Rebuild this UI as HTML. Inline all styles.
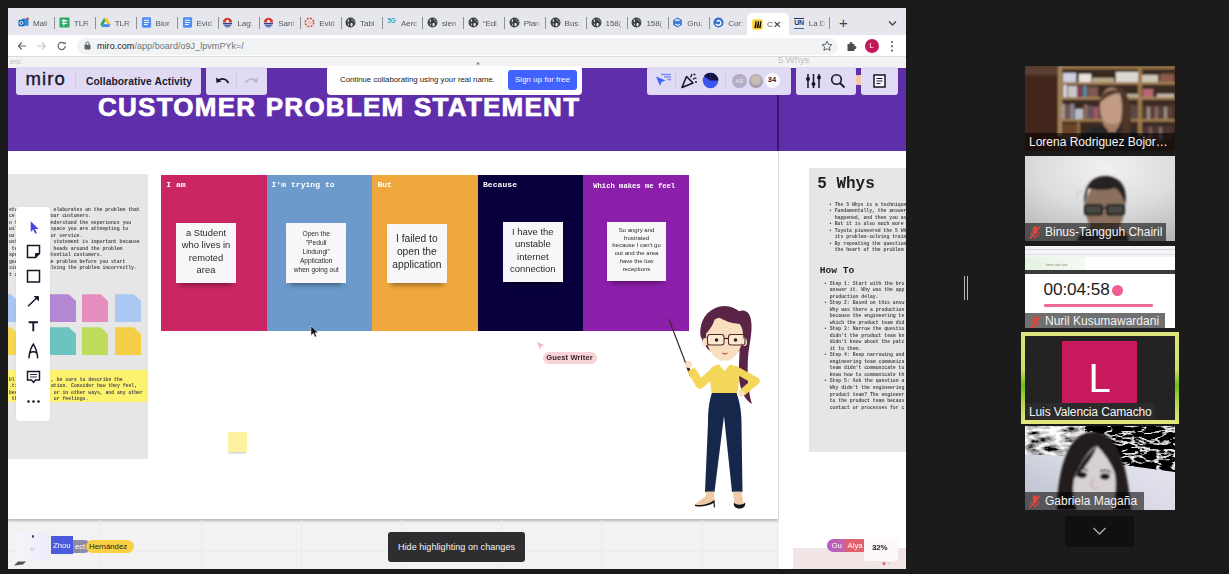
<!DOCTYPE html>
<html lang="en">
<head>
<meta charset="utf-8">
<title>Zoom - Miro Collaborative Activity</title>
<style>
*{box-sizing:border-box;margin:0;padding:0}
html,body{width:1229px;height:574px;overflow:hidden;background:#1b1b1b;font-family:"Liberation Sans",sans-serif}
i{font-style:normal}
.abs{position:absolute}
#share{position:absolute;left:8px;top:8px;width:898px;height:561px;background:#f2f2f2;overflow:hidden}
#blurwrap{position:absolute;left:0;top:0;width:898px;height:561px;filter:blur(.35px)}
/* chrome */
#tabs{position:absolute;left:0;top:0;width:898px;height:27px;background:#e6e7ed}
.tab{position:absolute;top:5px;height:22px;width:41px;font-size:8.1px;color:#54575d;white-space:nowrap;overflow:hidden}
.tab.act{background:#fff;border-radius:5px 5px 0 0;width:41.5px;top:5px;height:22px}
.tab.act .ic{top:5.5px}.tab.act .tx{top:7px}
.tab .ic{position:absolute;left:4.5px;top:4px;width:11px;height:11px;display:block}
.tab .tx{position:absolute;left:19.5px;top:5.5px;letter-spacing:-.1px;width:17.5px;overflow:hidden;-webkit-mask-image:linear-gradient(90deg,#000 70%,transparent)}
.tab .sep{position:absolute;left:0;top:4px;width:1px;height:12px;background:#8e9097}
#addr{position:absolute;left:0;top:27px;width:898px;height:22px;background:#fff;border-bottom:1px solid #dcdcdc}
#omni{position:absolute;left:69px;top:2.5px;width:761px;height:17px;border-radius:8.5px;background:#f1f3f4}
#url{position:absolute;left:89px;top:5.5px;font-size:9px;color:#70757a;letter-spacing:.05px;white-space:nowrap}
#url b{font-weight:normal;color:#202124}
/* miro */
#canvasTop{position:absolute;left:0;top:49px;width:898px;height:11px;background:#f3f3f3}
#purple{position:absolute;left:0;top:60px;width:898px;height:83px;background:#5f2fab}
#title{position:absolute;left:90px;top:84px;font-size:26px;font-weight:bold;color:#fff;white-space:nowrap;letter-spacing:1.25px;word-spacing:1px;line-height:30px;-webkit-text-stroke:.7px #fff}
#frameL{position:absolute;left:0;top:143px;width:770px;height:368px;background:#fff;box-shadow:0 1.5px 2.5px rgba(0,0,0,.25)}
#frameR{position:absolute;left:771px;top:143px;width:127px;height:418px;background:#fff}
#vline{position:absolute;left:769px;top:60px;width:1.5px;height:83px;background:#35186d}
#vline2{position:absolute;left:769.5px;top:143px;width:1.5px;height:368px;background:#d9d9de}
.panel{position:absolute;background:#e1daf5;border-radius:3px;top:59px;height:27.5px}
.mono{font-family:"Liberation Mono","DejaVu Sans Mono",monospace}
.col{position:absolute;top:166.8px;height:156.1px}
.col h4{position:absolute;left:5px;top:5.5px;font-family:"Liberation Mono",monospace;font-size:8.1px;line-height:10px;font-weight:bold;color:#fff;white-space:nowrap}
.note{position:absolute;background:#f8f6f9;box-shadow:0 6px 5px -4px rgba(0,0,0,.4);display:flex;align-items:center;justify-content:center;text-align:center;color:#2b2b2b;white-space:nowrap}
.gpanel{position:absolute;background:#e6e6e6;overflow:hidden}
.tiny{position:absolute;font-family:"Liberation Mono",monospace;color:#4c4c4c;white-space:pre;font-size:4.79px;line-height:6.53px;font-weight:bold}
.st{position:absolute;width:26px;height:28px;clip-path:polygon(0 0,72% 0,100% 24%,100% 100%,0 100%)}
/* zoom panel */
.tile{position:absolute;left:1025px;width:150px;overflow:hidden}
.lbl{position:absolute;left:0;bottom:0;height:18px;background:rgba(0,0,0,.56);color:#f4f4f4;font-size:12px;line-height:18px;white-space:nowrap;font-family:"Liberation Sans",sans-serif;letter-spacing:0;padding-left:4px}
.lbl.m{padding-left:20px}
.lbl svg{position:absolute;left:2.5px;top:2px;width:14px;height:15px}
.tsvg{overflow:visible}
.tsvg text{font-family:"Liberation Mono",monospace;font-size:4.79px;font-weight:bold;fill:#4c4c4c;white-space:pre}

</style>
</head>
<body>
<div id="share"><div id="blurwrap">
  <div id="tabs">
<div class="tab" style="left:5.4px"><svg class="ic" viewBox="0 0 12 12"><rect x="4" y="1.5" width="7.5" height="8" rx="1" fill="#2f8de0"/><rect x="0.5" y="3" width="6.5" height="7" rx="1" fill="#1565b8"/><circle cx="3.7" cy="6.5" r="1.7" fill="none" stroke="#fff" stroke-width="1"/><circle cx="10.5" cy="2" r="1.4" fill="#e0443a"/></svg><span class="tx">Mail</span></div>
<div class="tab" style="left:46.3px"><i class="sep"></i><svg class="ic" viewBox="0 0 12 12"><rect x="0.5" y="0.5" width="11" height="11" rx="1.5" fill="#2aa866"/><path d="M3 4h6M3 6.8h6M5.3 2.5v7" stroke="#fff" stroke-width="1.3"/></svg><span class="tx">TLR</span></div>
<div class="tab" style="left:87.2px"><i class="sep"></i><svg class="ic" viewBox="0 0 12 12"><path d="M4.3 1.2h3.4L11.6 8H8.2z" fill="#f6c533"/><path d="M4.3 1.2L0.4 8l1.7 2.9L6 4.1z" fill="#2da462"/><path d="M2.1 10.9h7.8L11.6 8H3.8z" fill="#4686f4"/></svg><span class="tx">TLR</span></div>
<div class="tab" style="left:128.1px"><i class="sep"></i><svg class="ic" viewBox="0 0 12 12"><rect x="1" y="0.3" width="10" height="11.4" rx="1.6" fill="#4f8df5"/><path d="M3.2 3.6h5.6M3.2 5.9h5.6M3.2 8.2h4" stroke="#fff" stroke-width="1.1"/></svg><span class="tx">Bior</span></div>
<div class="tab" style="left:169.0px"><i class="sep"></i><svg class="ic" viewBox="0 0 12 12"><rect x="1" y="0.3" width="10" height="11.4" rx="1.6" fill="#4f8df5"/><path d="M3.2 3.6h5.6M3.2 5.9h5.6M3.2 8.2h4" stroke="#fff" stroke-width="1.1"/></svg><span class="tx">Evid</span></div>
<div class="tab" style="left:209.9px"><i class="sep"></i><svg class="ic" viewBox="0 0 12 12"><circle cx="6" cy="6" r="5.4" fill="#fff"/><path d="M0.8 6a5.2 5.2 0 0 1 10.4 0z" fill="#d8352c"/><path d="M1 7.2h10M1.8 9h8.4M3.4 10.6h5.2" stroke="#27459c" stroke-width="1.2"/><circle cx="6" cy="4.6" r="1.6" fill="#fff"/></svg><span class="tx">Lag:</span></div>
<div class="tab" style="left:250.8px"><i class="sep"></i><svg class="ic" viewBox="0 0 12 12"><circle cx="6" cy="6" r="5.4" fill="#fff"/><path d="M0.8 6a5.2 5.2 0 0 1 10.4 0z" fill="#d8352c"/><path d="M1 7.2h10M1.8 9h8.4M3.4 10.6h5.2" stroke="#27459c" stroke-width="1.2"/><circle cx="6" cy="4.6" r="1.6" fill="#fff"/></svg><span class="tx">Sant</span></div>
<div class="tab" style="left:291.7px"><i class="sep"></i><svg class="ic" viewBox="0 0 12 12"><circle cx="6" cy="6" r="4.6" fill="none" stroke="#e1452f" stroke-width="1.7" stroke-dasharray="2.2 1.4"/><circle cx="6" cy="6" r="1.5" fill="none" stroke="#e1452f" stroke-width=".8" stroke-dasharray="1 1"/></svg><span class="tx">Evid</span></div>
<div class="tab" style="left:332.6px"><i class="sep"></i><svg class="ic" viewBox="0 0 12 12"><circle cx="6" cy="6" r="5.4" fill="#3c4043"/><path d="M3 2.5c1.5 0 1.8 1.2 1.2 2.2S2.6 6 3.6 7s.6 2.4-.3 2.6M7.5 1.5c-.6 1 0 2 1.2 2.2s2 1.2 1.6 2.6M6.6 6.6c1-.4 2.2.4 1.8 1.8S7 10.6 6.4 10 5.800 7 6.600 6.600z" fill="#e9e9ec" stroke="none"/></svg><span class="tx">Tabl</span></div>
<div class="tab" style="left:373.5px"><i class="sep"></i><span class="ic" style="font-size:6.5px;font-weight:bold;color:#39a7b5;width:12px;top:4px;left:6px;letter-spacing:-.3px;height:8px;line-height:8px">5G</span><span class="tx">Aerc</span></div>
<div class="tab" style="left:414.4px"><i class="sep"></i><svg class="ic" viewBox="0 0 12 12"><circle cx="6" cy="6" r="5.4" fill="#3c4043"/><path d="M3 2.5c1.5 0 1.8 1.2 1.2 2.2S2.6 6 3.6 7s.6 2.4-.3 2.6M7.5 1.5c-.6 1 0 2 1.2 2.2s2 1.2 1.6 2.6M6.6 6.6c1-.4 2.2.4 1.8 1.8S7 10.6 6.4 10 5.800 7 6.600 6.600z" fill="#e9e9ec" stroke="none"/></svg><span class="tx">sien</span></div>
<div class="tab" style="left:455.3px"><i class="sep"></i><svg class="ic" viewBox="0 0 12 12"><circle cx="6" cy="6" r="5.4" fill="#3c4043"/><path d="M3 2.5c1.5 0 1.8 1.2 1.2 2.2S2.6 6 3.6 7s.6 2.4-.3 2.6M7.5 1.5c-.6 1 0 2 1.2 2.2s2 1.2 1.6 2.6M6.6 6.6c1-.4 2.2.4 1.8 1.8S7 10.6 6.4 10 5.800 7 6.600 6.600z" fill="#e9e9ec" stroke="none"/></svg><span class="tx">“Edi</span></div>
<div class="tab" style="left:496.2px"><i class="sep"></i><svg class="ic" viewBox="0 0 12 12"><circle cx="6" cy="6" r="5.4" fill="#3c4043"/><path d="M3 2.5c1.5 0 1.8 1.2 1.2 2.2S2.6 6 3.6 7s.6 2.4-.3 2.6M7.5 1.5c-.6 1 0 2 1.2 2.2s2 1.2 1.6 2.6M6.6 6.6c1-.4 2.2.4 1.8 1.8S7 10.6 6.4 10 5.800 7 6.600 6.600z" fill="#e9e9ec" stroke="none"/></svg><span class="tx">Plan</span></div>
<div class="tab" style="left:537.1px"><i class="sep"></i><svg class="ic" viewBox="0 0 12 12"><circle cx="6" cy="6" r="5.4" fill="#3c4043"/><path d="M3 2.5c1.5 0 1.8 1.2 1.2 2.2S2.6 6 3.6 7s.6 2.4-.3 2.6M7.5 1.5c-.6 1 0 2 1.2 2.2s2 1.2 1.6 2.6M6.6 6.6c1-.4 2.2.4 1.8 1.8S7 10.6 6.4 10 5.800 7 6.600 6.600z" fill="#e9e9ec" stroke="none"/></svg><span class="tx">Bus:</span></div>
<div class="tab" style="left:578.0px"><i class="sep"></i><svg class="ic" viewBox="0 0 12 12"><circle cx="6" cy="6" r="5.4" fill="#3c4043"/><path d="M3 2.5c1.5 0 1.8 1.2 1.2 2.2S2.6 6 3.6 7s.6 2.4-.3 2.6M7.5 1.5c-.6 1 0 2 1.2 2.2s2 1.2 1.6 2.6M6.6 6.6c1-.4 2.2.4 1.8 1.8S7 10.6 6.4 10 5.800 7 6.600 6.600z" fill="#e9e9ec" stroke="none"/></svg><span class="tx">158(</span></div>
<div class="tab" style="left:618.9px"><i class="sep"></i><svg class="ic" viewBox="0 0 12 12"><circle cx="6" cy="6" r="5.4" fill="#3c4043"/><path d="M3 2.5c1.5 0 1.8 1.2 1.2 2.2S2.6 6 3.6 7s.6 2.4-.3 2.6M7.5 1.5c-.6 1 0 2 1.2 2.2s2 1.2 1.6 2.6M6.6 6.6c1-.4 2.2.4 1.8 1.8S7 10.6 6.4 10 5.800 7 6.600 6.600z" fill="#e9e9ec" stroke="none"/></svg><span class="tx">158(</span></div>
<div class="tab" style="left:659.8px"><i class="sep"></i><svg class="ic" viewBox="0 0 12 12"><path d="M6 .5l4.8 2.7v5.600L6 11.500 1.200 8.800V3.200z" fill="#3f7fd0"/><path d="M3.500 4.200c.8-1.300 3.800-1.600 4.600.2M8.500 7.800c-.8 1.300-3.800 1.600-4.600-.2" stroke="#fff" stroke-width="1.100" fill="none"/></svg><span class="tx">Gru;</span></div>
<div class="tab" style="left:700.7px"><i class="sep"></i><svg class="ic" viewBox="0 0 12 12"><circle cx="6" cy="6" r="5.500" fill="#2f6fcf"/><path d="M3 7.500c1.500 2.500 6 1.500 5.500-1.500S4.500 3.500 4.500 5.500" stroke="#fff" stroke-width="1.500" fill="none"/></svg><span class="tx">Cor:</span></div>
<div class="tab act" style="left:739.4px"><svg class="ic" viewBox="0 0 12 12"><rect x=".3" y=".3" width="11.400" height="11.400" rx="2.200" fill="#ffd02f"/><path d="M2.600 9.800L3.800 2.400h1.400L4.600 9.800zM5.200 9.800L6.400 2.400h1.400L7.200 9.800zM7.800 9.800L9 2.400h1.200L9.600 9.800z" fill="#111"/></svg><span class="tx">C</span><span class="tx" style="left:26px;font-size:9.500px;top:5.500px;color:#333;width:12px;-webkit-mask-image:none">✕</span></div>
<div class="tab" style="left:780.3px"><span class="ic" style="font-size:7px;font-weight:bold;color:#1f2f7a;width:10.500px;top:4.500px;left:5.500px;letter-spacing:-.3px;height:11px;line-height:8px;border-top:1.500px solid #1f2f7a;border-bottom:1.500px solid #2a6a8a;text-align:center">UN</span><span class="tx" style="left:20.500px">La D</span></div>
<div class="tab" style="left:821.2px"><i class="sep"></i></div>
    <div class="abs" style="left:831px;top:6px;font-size:15px;color:#3c4043;line-height:18px">+</div>
    <svg class="abs" style="left:879.500px;top:12px" width="9" height="7" viewBox="0 0 9 7"><path d="M1 1.500l3.500 3.500L8 1.500" fill="none" stroke="#444" stroke-width="1.300"/></svg>
  </div>
  <div id="addr">
    <div id="omni"></div>
    <svg class="abs" style="left:10px;top:5px" width="60" height="12" viewBox="0 0 60 12">
      <path d="M8 6H0.500M3.800 2.500L0.300 6l3.500 3.500" fill="none" stroke="#5f6368" stroke-width="1.200"/>
      <path d="M19 6h8M23.700 2.500L27.200 6l-3.500 3.500" fill="none" stroke="#c4c6c9" stroke-width="1.200"/>
      <path d="M47.300 6a3.600 3.600 0 1 1-1.100-2.600" fill="none" stroke="#5f6368" stroke-width="1.200"/><path d="M47.600 1.600v2.600h-2.600z" fill="#5f6368"/>
    </svg>
    <svg class="abs" style="left:76px;top:6px" width="7" height="9" viewBox="0 0 7 9"><rect x=".5" y="3.800" width="6" height="4.700" rx=".8" fill="#5f6368"/><path d="M1.900 4V2.600a1.600 1.600 0 0 1 3.200 0V4" fill="none" stroke="#5f6368" stroke-width="1"/></svg>
    <div id="url"><b>miro.com</b>/app/board/o9J_lpvmPYk=/</div>
    <svg class="abs" style="left:813px;top:5px" width="12" height="12" viewBox="0 0 12 12"><path d="M6 1.200l1.500 3.100 3.400.4-2.500 2.300.7 3.400L6 8.700 2.900 10.400l.7-3.400L1.100 4.700l3.400-.4z" fill="none" stroke="#5f6368" stroke-width="1"/></svg>
    <svg class="abs" style="left:838px;top:5px" width="12" height="12" viewBox="0 0 12 12"><path d="M1.500 4h2.200a1.400 1.400 0 1 1 2.600 0h2.200v2.200a1.400 1.400 0 1 1 0 2.600V11h-7z" fill="#4a4d52"/></svg>
    <div class="abs" style="left:856.500px;top:4px;width:14px;height:14px;border-radius:50%;background:#c2185b;color:#fff;font-size:7.500px;line-height:14px;text-align:center">L</div>
    <svg class="abs" style="left:882px;top:5px" width="4" height="13" viewBox="0 0 4 13"><circle cx="2" cy="2" r="1.100" fill="#5f6368"/><circle cx="2" cy="6.300" r="1.100" fill="#5f6368"/><circle cx="2" cy="10.600" r="1.100" fill="#5f6368"/></svg>
  </div>
  <div id="canvasTop">
    <div class="abs" style="left:2px;top:1px;font-size:7px;color:#bbb;line-height:8px">eric</div>
    <div class="abs" style="left:770px;top:-3.500px;font-size:9.400px;color:#c2c2c2;line-height:11px">5 Whys</div>
  </div>
  <div id="purple"></div>
  <div id="vline"></div>
  <div id="title">CUSTOMER PROBLEM STATEMENT</div>
  <!-- miro top toolbars -->
  <div class="panel" style="left:8px;width:185px">
    <div class="abs" style="left:9.500px;top:1px;font-size:18.500px;line-height:22px;color:#16162b;letter-spacing:1.100px;-webkit-text-stroke:.35px #16162b">miro</div>
    <i class="abs" style="left:59px;top:5px;width:1px;height:17px;background:#d4ccec"></i>
    <div class="abs" style="left:70px;top:7.500px;font-size:10.300px;line-height:13px;font-weight:bold;color:#1c1c30;white-space:nowrap;letter-spacing:.05px">Collaborative Activity</div>
  </div>
  <div class="panel" style="left:198px;width:61px">
    <svg class="abs" style="left:9px;top:8px" width="16" height="11" viewBox="0 0 16 11"><path d="M2.500 6.500C5 3 10.500 2.500 13.500 8" fill="none" stroke="#16162b" stroke-width="1.700"/><path d="M1 2.500l.6 5.400 5-1.700z" fill="#16162b"/></svg>
    <i class="abs" style="left:30px;top:5px;width:1px;height:17px;background:#d4ccec"></i>
    <svg class="abs" style="left:37px;top:8px" width="16" height="11" viewBox="0 0 16 11"><path d="M13.500 6.500C11 3 5.500 2.500 2.500 8" fill="none" stroke="#bdb5d6" stroke-width="1.700"/><path d="M15 2.500l-.6 5.400-5-1.700z" fill="#bdb5d6"/></svg>
  </div>
  <div class="abs" style="left:319px;top:58px;width:255px;height:28.500px;background:#fff;border-radius:4px">
    <div class="abs" style="left:13px;top:9px;font-size:7.800px;line-height:10px;color:#222;white-space:nowrap;letter-spacing:0">Continue collaborating using your real name.</div>
    <div class="abs" style="left:181px;top:3.500px;width:69px;height:20.500px;background:#4262ff;border-radius:3px;color:#fff;font-size:7.800px;line-height:20.500px;text-align:center;letter-spacing:.1px">Sign up for free</div>
  </div>
  <svg class="abs" style="left:467.500px;top:52.500px" width="4" height="4" viewBox="0 0 4 4"><path d="M0 3.500L2 .5l2 3z" fill="#8a8a8a"/></svg>
  <div class="panel" style="left:638.500px;width:144.500px">
    <svg class="abs" style="left:6.500px;top:5px" width="20" height="18" viewBox="0 0 20 18"><path d="M3 4.500l9.500 4-4 1.500-1.500 4z" fill="#4262ff"/><path d="M8 2.500h10M11 5h7M14.500 7.500H18" stroke="#7b8cf5" stroke-width="1.300"/></svg>
    <i class="abs" style="left:28.500px;top:5px;width:1px;height:17px;background:#cfc6ea"></i>
    <svg class="abs" style="left:32.500px;top:4px" width="20" height="20" viewBox="0 0 20 20"><path d="M3 16.500L7.500 5.500l6.500 6.500z" fill="none" stroke="#16162b" stroke-width="1.600" stroke-linejoin="round"/><path d="M11 6c1.500-.5 2-2 1.500-3M14 8.500c1-1.500 2.500-1.500 3.500-1" fill="none" stroke="#16162b" stroke-width="1.300"/><circle cx="15.500" cy="3.500" r="1" fill="#16162b"/><circle cx="17" cy="11" r=".9" fill="#16162b"/></svg>
    <svg class="abs" style="left:55px;top:4.500px" width="17" height="17" viewBox="0 0 17 17"><circle cx="8.500" cy="8.500" r="7.800" fill="#3b55ee"/><path d="M8.500 8.500V.700A7.800 7.800 0 0 1 16.300 8.500z" fill="#14143c"/><path d="M8.500 8.500V.700A7.800 7.800 0 0 0 2 4.200z" fill="#14143c"/></svg>
    <i class="abs" style="left:78.500px;top:5px;width:1px;height:17px;background:#cfc6ea"></i>
    <div class="abs" style="left:85.500px;top:6.500px;width:14.500px;height:14.500px;border-radius:50%;background:#b3adc9;color:#e4e0f2;font-size:5.500px;line-height:14.500px;text-align:center;font-weight:bold">AS</div>
    <div class="abs" style="left:102px;top:6.500px;width:14.500px;height:14.500px;border-radius:50%;background:radial-gradient(circle at 50% 40%,#c9bdb8 0 35%,#9d96a6 70%)"></div>
    <div class="abs" style="left:118px;top:6px;width:15px;height:15px;border-radius:50%;background:#fbfaff;color:#1c1c30;font-size:7.500px;line-height:14.500px;text-align:center;font-weight:bold">34</div>
  </div>
  <div class="panel" style="left:788px;width:60px">
    <svg class="abs" style="left:9px;top:6px" width="17" height="16" viewBox="0 0 17 16"><path d="M3 1v14M8.500 1v14M14 1v14" stroke="#16162b" stroke-width="1.500"/><circle cx="3" cy="6" r="2" fill="#16162b"/><circle cx="8.500" cy="11" r="2" fill="#16162b"/><circle cx="14" cy="4.500" r="2" fill="#16162b"/></svg>
    <svg class="abs" style="left:34px;top:6px" width="16" height="16" viewBox="0 0 16 16"><circle cx="6.500" cy="6.500" r="4.800" fill="none" stroke="#16162b" stroke-width="1.600"/><path d="M10 10l4.500 4.500" stroke="#16162b" stroke-width="1.800"/></svg>
  </div>
  <div class="abs" style="left:848px;top:67px;width:5px;height:10px;background:#f4c7a6"></div>
  <div class="panel" style="left:853px;width:37px">
    <svg class="abs" style="left:12px;top:7px" width="13" height="14" viewBox="0 0 13 14"><rect x="1" y="1" width="11" height="12" fill="#fbfaff" stroke="#16162b" stroke-width="1.500"/><path d="M3.500 4.500h6M3.500 7h6M3.500 9.500h4" stroke="#16162b" stroke-width="1.100"/></svg>
  </div>

  <div id="frameL"></div>
  <div id="frameR"></div>
  <div id="vline2"></div>
  <!-- left grey info panel -->
  <div class="gpanel" style="left:0;top:166.300px;width:140px;height:285px">
    <svg class="abs tsvg" style="left:0.60px;top:32.00px" width="13.5" height="73.8"><text><tspan x="0.00" y="4.54">eto</tspan><tspan x="0.00" y="11.07">ce</tspan><tspan x="0.00" y="17.60">n t</tspan><tspan x="0.00" y="24.13">wil</tspan><tspan x="0.00" y="30.66">ux</tspan><tspan x="0.00" y="37.19">ust</tspan><tspan x="2.87" y="43.72">te</tspan><tspan x="0.00" y="50.25">xpe</tspan><tspan x="0.00" y="56.78">goo</tspan><tspan x="0.00" y="63.31">sinc</tspan><tspan x="0.00" y="69.84">t a</tspan></text></svg>
    <svg class="abs tsvg" style="left:37.30px;top:32.00px" width="96.9" height="67.3"><text><tspan x="8.62" y="4.54">elaborates on the problem that</tspan><tspan x="2.87" y="11.07">your customers.</tspan><tspan x="2.87" y="17.60">understand the experience you</tspan><tspan x="5.75" y="24.13">space you are attempting to</tspan><tspan x="5.75" y="30.66">or service.</tspan><tspan x="8.62" y="37.19">statement is important because</tspan><tspan x="8.62" y="43.72">heads around the problem</tspan><tspan x="0.00" y="50.25">potential customers.</tspan><tspan x="0.00" y="56.78">the problem before you start</tspan><tspan x="0.00" y="63.31">solving the problem incorrectly.</tspan></text></svg>
    <i class="st" style="left:-16px;top:120px;background:#a9c4f0"></i>
    <i class="st" style="left:42px;top:120px;background:#b387d3"></i>
    <i class="st" style="left:74px;top:120px;background:#e58dbd"></i>
    <i class="st" style="left:107px;top:120px;background:#a9c9f2"></i>
    <i class="st" style="left:-16px;top:153px;background:#f5d64f"></i>
    <i class="st" style="left:42px;top:153px;background:#6cc4c0"></i>
    <i class="st" style="left:74px;top:153px;background:#bfdc5c"></i>
    <i class="st" style="left:107px;top:153px;background:#f4cf45"></i>
    <div class="abs" style="left:0;top:195.500px;width:138.700px;height:32.700px;background:#fdf26d"></div>
    <svg class="abs tsvg" style="left:0.60px;top:201.70px" width="10.6" height="28.1"><text><tspan x="0.00" y="4.54">bl</tspan><tspan x="0.00" y="11.07">.ti</tspan><tspan x="0.00" y="17.60">bed</tspan><tspan x="2.87" y="24.13">th</tspan></text></svg>
    <svg class="abs tsvg" style="left:42.50px;top:201.70px" width="94.0" height="28.1"><text><tspan x="0.00" y="4.54">, be sure to describe the</tspan><tspan x="0.00" y="11.07">ation. Consider how they feel,</tspan><tspan x="2.87" y="17.60">or in other ways, and any other</tspan><tspan x="2.87" y="24.13">or feelings.</tspan></text></svg>
  </div>
  <!-- columns -->
  <div class="col" style="left:153.200px;width:105.400px;background:#c92663"><h4>I am</h4></div>
  <div class="col" style="left:258.500px;width:106px;background:#6b9acb"><h4>I'm trying to</h4></div>
  <div class="col" style="left:364.400px;width:105.800px;background:#f0a73c"><h4>But</h4></div>
  <div class="col" style="left:470px;width:105.300px;background:#07003d"><h4>Because</h4></div>
  <div class="col" style="left:575.200px;width:106.100px;background:#8b1fa9"><h4 style="left:10px;font-size:7.200px;top:6px">Which makes me feel</h4></div>
  <div class="note" style="left:168px;top:215px;width:60px;height:60px;font-size:9.400px;line-height:12.400px;padding-bottom:3px">a Student<br>who lives in<br>remoted<br>area</div>
  <div class="note" style="left:278.400px;top:215px;width:59.600px;height:60px;font-size:6.650px;line-height:9px;padding-bottom:4px">Open the<br>"Peduli<br>Lindungi"<br>Application<br>when going out</div>
  <div class="note" style="left:379px;top:216px;width:59.700px;height:59px;font-size:10.250px;line-height:12.900px;padding-bottom:2.600px">I failed to<br>open the<br>application</div>
  <div class="note" style="left:495px;top:214px;width:59.600px;height:59.500px;font-size:9.450px;line-height:12.400px;padding-bottom:2px">I have the<br>unstable<br>internet<br>connection</div>
  <div class="note" style="left:598.700px;top:214px;width:59.600px;height:59px;font-size:6px;line-height:7.800px;padding-bottom:2.500px">So angry and<br>frustrated<br>because I can't go<br>out and the area<br>have the low<br>receptions</div>
  <!-- left vertical toolbar -->
  <div class="abs" style="left:8px;top:199px;width:34px;height:213.500px;background:#fff;border-radius:3px;box-shadow:0 0 2px rgba(0,0,0,.08)">
    <svg class="abs" style="left:0;top:0" width="34" height="214" viewBox="0 0 34 214">
      <path d="M14.700 14.200v10.800l2.600-2.500 1.900 4.200 1.700-.75-1.900-4h3.600z" fill="#4a45e0"/>
      <path d="M11.500 38.500h12v8l-4 4h-8z" fill="none" stroke="#16162b" stroke-width="1.500"/><path d="M23.500 46.500h-4v4" fill="#16162b" stroke="#16162b" stroke-width="1"/>
      <rect x="11.500" y="63.500" width="12" height="11.500" fill="none" stroke="#16162b" stroke-width="1.500"/>
      <path d="M12 99.300l9.500-9" stroke="#16162b" stroke-width="1.500"/><path d="M18.300 89.500h4.200v4.200z" fill="#16162b" stroke="#16162b" stroke-width=".9"/>
      <path d="M12.600 115.300h9.400M17.300 115v9.200" fill="none" stroke="#16162b" stroke-width="1.900"/>
      <path d="M13 150.800c.3-5 2-10 4.300-13.600 2.300 3.600 4 8.600 4.300 13.600M14.300 145.800c1.500-1.300 4.500-1.300 6 0" fill="none" stroke="#16162b" stroke-width="1.500" stroke-linecap="round"/>
      <path d="M11.500 164.500h12v8.500h-4l-2 2.500-2-2.500h-4z" fill="none" stroke="#16162b" stroke-width="1.400"/><path d="M14 167.500h7M14 170h7" stroke="#16162b" stroke-width=".9"/>
      <circle cx="12.500" cy="194.500" r="1.300" fill="#16162b"/><circle cx="17.500" cy="194.500" r="1.300" fill="#16162b"/><circle cx="22.500" cy="194.500" r="1.300" fill="#16162b"/>
    </svg>
  </div>
  <!-- small yellow sticky -->
  <div class="abs" style="left:220px;top:424px;width:19px;height:20px;background:#fdf2a0;box-shadow:0 2px 2px -1px rgba(0,0,0,.25)"></div>
  <!-- mouse cursor -->
  <svg class="abs" style="left:301.500px;top:317px" width="9" height="13" viewBox="0 0 9 13"><path d="M1 1v9.500l2.300-2.200 1.700 3.700 1.600-.7-1.700-3.600h3.200z" fill="#111" stroke="#eee" stroke-width=".5"/></svg>
  <!-- guest writer cursor -->
  <svg class="abs" style="left:528px;top:333px" width="10" height="10" viewBox="0 0 10 10"><path d="M1 1l7.500 3.200-3.300 1.100L4 8.700z" fill="#f5b7c1"/></svg>
  <div class="abs" style="left:534.500px;top:343.500px;width:54px;height:12.500px;border-radius:6px;background:#f8d3d8;color:#3a2a2e;font-size:7.600px;line-height:12.500px;text-align:center;font-weight:bold;letter-spacing:.1px;white-space:nowrap">Guest Writer</div>
  <svg class="abs" style="left:652px;top:287px" width="120" height="230" viewBox="660 295 120 230">
    <!-- pointer -->
    <path d="M668.800 319l19.500 51" stroke="#3b2a2a" stroke-width="1.200"/>
    <path d="M686.800 364.500l4 10.500" stroke="#4a2a22" stroke-width="2.800" stroke-linecap="round"/>
    <!-- ponytail -->
    <path d="M738 312c6-4 12 0 13 8 2 12-2 24-3 38s0 34 4 46c-7-4-12-13-13-27s3-38-1-57z" fill="#5a2447"/>
    <!-- hair back -->
    <ellipse cx="724.500" cy="331" rx="24" ry="25" fill="#5a2447"/>
    <!-- neck -->
    <rect x="720" y="355" width="8.500" height="12" fill="#f0c9a8"/>
    <!-- face -->
    <path d="M706 334c0-10 8-17 18.500-17S743 324 743 334c0 14-8 27-18.500 27S706 348 706 334z" fill="#f9dfc0"/>
    <ellipse cx="705" cy="342" rx="2.500" ry="4" fill="#f9dfc0"/><ellipse cx="744.500" cy="342" rx="2.500" ry="4" fill="#f9dfc0"/>
    <!-- fringe -->
    <path d="M701 338c-3-20 10-32 26-31 10 1 18 7 21 17-11 1-24-2-32-9-2 9-7 17-15 23z" fill="#5a2447"/>
    <!-- glasses -->
    <rect x="707.500" y="334.500" width="16.500" height="10.500" rx="2.500" fill="rgba(255,255,255,.3)" stroke="#4a2a24" stroke-width="1.050"/>
    <rect x="728.500" y="334.500" width="16.500" height="10.500" rx="2.500" fill="rgba(255,255,255,.3)" stroke="#4a2a24" stroke-width="1.050"/>
    <path d="M724 338.500h4.500" stroke="#3a1e1e" stroke-width="1.200"/>
    <circle cx="716.500" cy="340" r="1.800" fill="#3a1e1e"/><circle cx="735.500" cy="340" r="1.800" fill="#3a1e1e"/>
    <path d="M722.500 353c1.500 1 3.500 1 5 0" stroke="#c7564f" stroke-width="1.200" fill="none"/>
    <!-- right arm on hip -->
    <path d="M736 370l20 11-13 11" fill="none" stroke="#f4d658" stroke-width="7.500" stroke-linejoin="round" stroke-linecap="round"/>
    <circle cx="741.500" cy="393.500" r="3" fill="#f9dfc0"/>
    <!-- left arm (pointing) -->
    <path d="M715 371l-15 13.500-9-15" fill="none" stroke="#f4d658" stroke-width="8.500" stroke-linejoin="round" stroke-linecap="butt"/>
    <circle cx="688.500" cy="364.500" r="3.600" fill="#f9dfc0"/>
    <!-- torso -->
    <path d="M711 368c4-3 9-4.500 13.500-4.500s9.500 1.500 13.500 4.500c1.500 8 1 18-1 27h-25c-2-9-2.500-19-1-27z" fill="#f4d658"/>
    <path d="M717.500 363l7 8 7-8-3-2.500h-8z" fill="#fff"/>
    <!-- pants -->
    <path d="M712 393h24.500c3 8 5 18 5 30l1 69h-10.500l-8-76-9.500 76h-9.500l3-69c0-12 1-22 4-30z" fill="#15284b"/>
    <!-- feet -->
    <path d="M706 491.500h8l.5 9-7 3.500c-4 1.500-9 2-12 1 1-3 7-6 10.500-9z" fill="#f0c9a8"/>
    <path d="M733 491.500h8.500l2 12c0 3-7 3-9 1z" fill="#f0c9a8"/>
    <path d="M695 504.500c6 1.500 13 0 19.500-4.500l.5 7.500h-1.200l-.3-4.500c-5 3-13 4.500-18.500 3z" fill="#151515"/>
    <path d="M734 502.500c2 3 9 3 11 0 1 3.500-1.500 6-5.500 6s-6.500-2.500-5.500-6z" fill="#151515"/>
  </svg>

  <!-- right frame 5 whys panel -->
  <div class="gpanel" style="left:800.700px;top:159.800px;width:100px;height:284px">
    <div class="abs mono" style="left:8.500px;top:5px;font-size:16px;line-height:22px;font-weight:bold;color:#1d1d1d;white-space:nowrap">5 Whys</div>
    <svg class="abs tsvg" style="left:20.20px;top:33.50px" width="79.6" height="54.2"><text><tspan x="0.00" y="4.54">• The 5 Whys is a technique</tspan><tspan x="0.00" y="11.07">• Fundamentally, the answer</tspan><tspan x="5.75" y="17.60">happened, and then you as</tspan><tspan x="0.00" y="24.13">• But it is also much more</tspan><tspan x="0.00" y="30.66">• Toyota pioneered the 5 Wh</tspan><tspan x="5.75" y="37.19">its problem-solving train</tspan><tspan x="0.00" y="43.72">• By repeating the question</tspan><tspan x="5.75" y="50.25">the heart of the problem</tspan></text></svg>
    <div class="abs mono" style="left:11px;top:97.500px;font-size:9.600px;line-height:12px;font-weight:bold;color:#1d1d1d;white-space:nowrap">How To</div>
    <svg class="abs tsvg" style="left:15.20px;top:111.80px" width="82.5" height="132.6"><text><tspan x="0.00" y="4.54">• Step 1: Start with the bro</tspan><tspan x="5.75" y="11.07">answer it. Why was the app</tspan><tspan x="5.75" y="17.60">production delay.</tspan><tspan x="0.00" y="24.13">• Step 2: Based on this answ</tspan><tspan x="5.75" y="30.66">Why was there a production</tspan><tspan x="5.75" y="37.19">because the engineering te</tspan><tspan x="5.75" y="43.72">which the product team did</tspan><tspan x="0.00" y="50.25">• Step 3: Narrow the questio</tspan><tspan x="5.75" y="56.78">didn't the product team kn</tspan><tspan x="5.75" y="63.31">didn't know about the patc</tspan><tspan x="5.75" y="69.84">it to them.</tspan><tspan x="0.00" y="76.37">• Step 4: Keep narrowing and</tspan><tspan x="5.75" y="82.90">engineering team communica</tspan><tspan x="5.75" y="89.43">team didn't communicate to</tspan><tspan x="5.75" y="95.96">know how to communicate th</tspan><tspan x="0.00" y="102.49">• Step 5: Ask the question a</tspan><tspan x="5.75" y="109.02">Why didn't the engineering</tspan><tspan x="5.75" y="115.55">product team? The engineer</tspan><tspan x="5.75" y="122.08">to the product team becaus</tspan><tspan x="5.75" y="128.61">contact or processes for c</tspan></text></svg>
  </div>

  <!-- bottom canvas grid -->
  <i class="abs" style="left:92px;top:512px;width:1px;height:49px;background:#ebebeb"></i>
  <i class="abs" style="left:192.500px;top:512px;width:1px;height:49px;background:#ebebeb"></i>
  <i class="abs" style="left:293px;top:512px;width:1px;height:49px;background:#ebebeb"></i>
  <i class="abs" style="left:393px;top:512px;width:1px;height:49px;background:#ececec"></i>
  <i class="abs" style="left:493px;top:512px;width:1px;height:49px;background:#ececec"></i>
  <i class="abs" style="left:593px;top:512px;width:1px;height:49px;background:#ececec"></i>
  <i class="abs" style="left:693.500px;top:512px;width:1px;height:49px;background:#ececec"></i>
  <i class="abs" style="left:0;top:543px;width:770px;height:1px;background:#ececec"></i>
  <!-- collapsed panel + cursors labels -->
  <div class="abs" style="left:8px;top:524px;width:34px;height:28px;background:linear-gradient(90deg,#f6f6fa,#ecebfa);border-radius:2px"></div>
  <div class="abs" style="left:22px;top:535.500px;font-size:9px;line-height:10px;color:#b5b5c8;letter-spacing:-1px">&raquo;</div>
  <i class="abs" style="left:23.500px;top:527px;width:2.500px;height:2.500px;border-radius:50%;background:#4b4b66"></i>
  <svg class="abs" style="left:5px;top:552px" width="14" height="6" viewBox="0 0 14 6"><path d="M1 5.500l4-4h8l-3 3z" fill="#555"/></svg>
  <div class="abs" style="left:42.500px;top:527.500px;width:20px;height:6px;background:#8785a3"></div>
  <div class="abs" style="left:62px;top:531.500px;width:21px;height:13px;border-radius:0 6.500px 6.500px 0;background:#8c8ba5;color:#fff;font-size:7.600px;line-height:13px;padding-left:5px">ect</div>
  <div class="abs" style="left:78px;top:531.500px;width:47.500px;height:13px;border-radius:6.500px;background:#f7d046;color:#2a2410;font-size:7.800px;line-height:13px;padding-left:3px;white-space:nowrap">Hernández</div>
  <div class="abs" style="left:42.500px;top:528px;width:22.500px;height:17.500px;background:#4a5be0;color:#fff;font-size:7.700px;line-height:19px;padding-left:2.500px;white-space:nowrap;overflow:hidden">Zhou</div>
  <!-- tooltip -->
  <div class="abs" style="left:380px;top:524px;width:137px;height:29.500px;border-radius:3px;background:#2e2e30;color:#f4f4f4;font-size:9px;line-height:30.500px;text-align:center;white-space:nowrap;letter-spacing:.05px">Hide highlighting on changes</div>
  <!-- right bottom -->
  <div class="abs" style="left:785px;top:539.500px;width:113px;height:22px;background:#f1e5e6"></div>
  <div class="abs" style="left:856px;top:531px;width:34px;height:22px;background:#fdf9fa;border-radius:2px"></div>
  <div class="abs" style="left:864px;top:533.500px;font-size:8px;line-height:11px;font-weight:bold;color:#1a1a2c;letter-spacing:-.2px">32%</div>
  <div class="abs" style="left:835px;top:531px;width:21px;height:13px;background:#e0616d;color:#fff;font-size:7.800px;line-height:13px;padding-left:4.500px">Alya</div>
  <div class="abs" style="left:818.500px;top:531px;width:18px;height:13px;border-radius:6.500px 0 0 6.500px;background:linear-gradient(90deg,#b45ac4,#c665a8);color:#fff;font-size:7.800px;line-height:13px;padding-left:5px">Gu</div>
  <svg class="abs" style="left:873px;top:553.500px" width="12" height="5" viewBox="0 0 12 5"><path d="M1 .5h4L3 4z" fill="#e25563"/><circle cx="8.500" cy="1.500" r=".9" fill="#9ec5e8"/></svg>

</div></div>
<!-- zoom divider handle -->
<i class="abs" style="left:963.500px;top:276px;width:1.500px;height:24px;background:#b9b9b9"></i>
<i class="abs" style="left:966.500px;top:276px;width:1.500px;height:24px;background:#b9b9b9"></i>
<svg width="0" height="0" style="position:absolute"><defs>
  <filter id="b1" x="-10%" y="-10%" width="120%" height="120%"><feGaussianBlur stdDeviation="0.900"/></filter>
  <filter id="b3" x="-5%" y="-5%" width="110%" height="110%"><feGaussianBlur stdDeviation="0.500"/></filter>
  <filter id="b2" x="-10%" y="-10%" width="120%" height="120%"><feGaussianBlur stdDeviation="1.600"/></filter>
</defs></svg>
<!-- tile 1 -->
<div class="tile" style="top:66px;height:84.500px;background:#4b3022">
  <svg class="abs" style="left:0;top:0" width="150" height="85" viewBox="0 0 150 85">
    <g filter="url(#b1)">
      <rect x="0" y="0" width="150" height="85" fill="#4a2f22"/>
      <rect x="0" y="0" width="33" height="85" fill="#43281a"/><rect x="0" y="0" width="33" height="9" fill="#5a4030"/>
      <rect x="33" y="0" width="117" height="85" fill="#3a2a20"/>
      <!-- books rows -->
      <rect x="38" y="7" width="13" height="9" fill="#cfd2de"/><rect x="54" y="8" width="12" height="8" fill="#e9e6e0"/><rect x="67" y="12" width="22" height="4" fill="#b9a98a"/>
      <rect x="91" y="6" width="22" height="10" fill="#ddd9d2"/><rect x="117" y="9" width="16" height="7" fill="#cfc6b5"/><rect x="135" y="8" width="14" height="8" fill="#8d5a48"/>
      <rect x="38" y="19" width="4" height="12" fill="#d9d1cf"/><rect x="43" y="20" width="9" height="11" fill="#c9c5c8"/><rect x="53" y="20" width="4" height="11" fill="#8a4150"/><rect x="58" y="20" width="4" height="11" fill="#5e8aa0"/><rect x="63" y="21" width="10" height="10" fill="#7d5a50"/>
      <rect x="101" y="28" width="14" height="4" fill="#b6ad9c"/><rect x="118" y="23" width="10" height="8" fill="#b76a72"/><rect x="132" y="28" width="17" height="4" fill="#c4bcae"/>
      <rect x="37" y="38" width="3" height="15" fill="#a39a96"/><rect x="41" y="39" width="3" height="14" fill="#7f5a55"/><rect x="45" y="38" width="4" height="15" fill="#8c8894"/><rect x="50" y="43" width="8" height="10" fill="#b9bcc5"/><rect x="59" y="39" width="4" height="14" fill="#8c6e5e"/><rect x="64" y="40" width="3" height="13" fill="#6d5a6a"/><rect x="68" y="41" width="6" height="12" fill="#9a5a62"/>
      <rect x="104" y="39" width="10" height="14" fill="#5b4a42"/><rect x="118" y="40" width="30" height="13" fill="#5a4038"/><rect x="122" y="41" width="3" height="12" fill="#9a8f88"/><rect x="130" y="41" width="3" height="12" fill="#8a6a66"/><rect x="139" y="41" width="3" height="12" fill="#9b9088"/>
      <rect x="118" y="60" width="30" height="14" fill="#4a3530"/><rect x="124" y="61" width="3" height="13" fill="#7a5a58"/><rect x="134" y="61" width="3" height="13" fill="#80706c"/>
      <rect x="38" y="58" width="14" height="16" fill="#6b4526"/>
      <!-- shelves -->
      <rect x="33" y="0" width="117" height="3" fill="#9a774c"/>
      <rect x="33" y="0" width="4" height="70" fill="#a6845a"/>
      <rect x="113" y="0" width="4" height="70" fill="#9a774c"/>
      <rect x="35" y="16" width="115" height="2.600" fill="#a6845a"/>
      <rect x="35" y="31" width="115" height="2.600" fill="#a6845a"/>
      <rect x="35" y="53" width="115" height="2.600" fill="#a07c50"/>
      <rect x="52" y="56" width="3" height="14" fill="#8a6a45"/>
      <!-- person -->
      <path d="M50 85c2-14 12-22 26-25h20c12 3 24 9 28 25z" fill="#25272b"/>
      <path d="M78 22c8-5 19-3 24 7 5 10 5 30 2 42l-9 1c3-10 2-24-1-34z" fill="#4e3629"/>
      <path d="M75 40c0-10 5-18 12-18s10 8 10 20-3 23-10 23-12-11-12-25z" fill="#c39c83"/>
      <path d="M75 45c1 9 5 20 12 20 4 0 7-5 9-12-3 5-7 7-12 5s-7-7-9-13z" fill="#a98066"/>
      <path d="M74 38c1-12 13-19 24-11-8 0-17 3-24 11z" fill="#5a3f30"/>
      <rect x="83" y="58" width="8" height="8" fill="#a67c62"/>
    </g>
  </svg>
  <div class="lbl" style="width:150px">Lorena Rodriguez Bojor…</div>
</div>
<!-- tile 2 -->
<div class="tile" style="top:156px;height:84.500px;background:#d6d6d6">
  <svg class="abs" style="left:0;top:0" width="150" height="85" viewBox="0 0 150 85">
    <defs><radialGradient id="g2" cx=".55" cy=".15" r=".95"><stop offset="0" stop-color="#f1f1f1"/><stop offset=".5" stop-color="#dcdcdc"/><stop offset="1" stop-color="#b4b4b4"/></radialGradient></defs>
    <rect width="150" height="85" fill="url(#g2)"/>
    <g filter="url(#b1)">
      <path d="M52 85c2-8 8-12 16-14h22c8 2 12 6 14 14z" fill="#3a3a3c"/>
      <ellipse cx="80" cy="52" rx="19.500" ry="27" fill="#8a6f5d"/>
      <path d="M60 50c-3-18 6-30 20-30s24 10 20 30c-2-10-6-16-10-18-10 3-22 2-27 0-1 6-2 12-3 18z" fill="#252122"/>
      <path d="M53 42c-3-4 2-8 6-6" stroke="#c9c9c9" stroke-width="1.200" fill="none"/>
      <rect x="60" y="49" width="17" height="9.500" rx="2" fill="rgba(45,58,55,.72)" stroke="#161616" stroke-width="2"/>
      <rect x="82" y="49" width="17" height="9.500" rx="2" fill="rgba(45,58,55,.72)" stroke="#161616" stroke-width="2"/>
      <path d="M77 52h5" stroke="#161616" stroke-width="1.500"/>
    </g>
  </svg>
  <div class="lbl m" style="width:141px"><svg viewBox="0 0 12 13"><rect x="4" y="1" width="4" height="7" rx="2" fill="#e0453e"/><path d="M2.500 6.500a3.500 3.500 0 0 0 7 0M6 10v2" stroke="#e0453e" stroke-width="1" fill="none"/><path d="M10.500 1L1.500 12" stroke="#e0453e" stroke-width="1.400"/></svg>Binus-Tangguh Chairil</div>
</div>
<!-- tile 3 -->
<div class="tile" style="top:246px;height:82px;background:#fff">
  <div class="abs" style="left:0;top:0;width:150px;height:11px;background:#f3f4f6"></div>
  <div class="abs" style="left:0;top:3px;width:150px;height:1px;background:#d5d7dc"></div>
  <div class="abs" style="left:0;top:8px;width:150px;height:1px;background:#dfe1e6"></div>
  <div class="abs" style="left:0;top:11px;width:60px;height:12.500px;background:linear-gradient(90deg,#e4f3e0,#f5faf3)"></div>
  <div class="abs" style="left:21px;top:16.500px;font-size:3.500px;line-height:4px;color:#888;white-space:nowrap">timer-tab.com</div>
  <div class="abs" style="left:0;top:23.500px;width:150px;height:4px;background:#3b3b3b"></div>
  <div class="abs" style="left:18.500px;top:33px;font-size:17.200px;line-height:20px;color:#1c1c1c;white-space:nowrap;letter-spacing:-.1px">00:04:58</div>
  <div class="abs" style="left:86.500px;top:38.500px;width:11.500px;height:11.500px;border-radius:50%;background:#ee5f94"></div>
  <div class="abs" style="left:19px;top:57.500px;width:109px;height:3.200px;background:#ee6a9a;border-radius:1px"></div>
  <div class="lbl m" style="width:140px;top:66.500px;bottom:auto;height:15.500px;line-height:17px"><svg viewBox="0 0 12 13"><rect x="4" y="1" width="4" height="7" rx="2" fill="#e0453e"/><path d="M2.500 6.500a3.500 3.500 0 0 0 7 0M6 10v2" stroke="#e0453e" stroke-width="1" fill="none"/><path d="M10.500 1L1.500 12" stroke="#e0453e" stroke-width="1.400"/></svg>Nuril Kusumawardani</div>
</div>
<!-- tile 4 active speaker -->
<div class="abs" style="left:1021px;top:332px;width:157.500px;height:92px;background:linear-gradient(180deg,#dfe57c 0%,#d4e070 35%,#7fc21e 55%,#b9d850 70%,#e6e67e 100%)"></div>
<div class="abs" style="left:1023px;top:334px;width:153.500px;height:88px;background:linear-gradient(90deg,#dfe57c,#dfe57c)"></div>
<div class="abs" style="left:1021px;top:332px;width:4px;height:92px;background:linear-gradient(180deg,#dfe57c 0%,#cfe06a 40%,#6fbd17 58%,#b9d850 78%,#e6e67e 100%)"></div>
<div class="abs" style="left:1174.500px;top:332px;width:4px;height:92px;background:linear-gradient(180deg,#dfe57c 0%,#cfe06a 40%,#6fbd17 58%,#b9d850 78%,#e6e67e 100%)"></div>
<div class="abs" style="left:1025px;top:336px;width:149.500px;height:84px;background:#232323"></div>
<div class="abs" style="left:1062px;top:341px;width:75px;height:62px;background:#c7195c;color:#fff;font-size:40px;line-height:74px;text-align:center">L</div>
<div class="abs lbl" style="left:1025px;top:402.500px;bottom:auto;width:130px;height:17.500px;background:#2b2b2b;letter-spacing:-.12px">Luis Valencia Camacho</div>
<!-- tile 5 -->
<div class="tile" style="top:426px;height:84px;background:#d4d6e2">
  <svg class="abs" style="left:0;top:0" width="150" height="84" viewBox="0 0 150 84">
    <defs>
      <linearGradient id="g5" x1="0" y1="1" x2="1" y2="0"><stop offset="0" stop-color="#b9bdca"/><stop offset=".45" stop-color="#d9dae6"/><stop offset="1" stop-color="#ececf4"/></linearGradient>
      <filter id="mrbL" x="0" y="0" width="100%" height="100%"><feTurbulence type="turbulence" baseFrequency="0.045 0.11" numOctaves="3" seed="7"/><feColorMatrix type="matrix" values="-2.4 0 0 0 1.25  -2.4 0 0 0 1.25  -2.4 0 0 0 1.25  0 0 0 0 1"/><feComposite in2="SourceGraphic" operator="in"/></filter>
      <filter id="mrbR" x="0" y="0" width="100%" height="100%"><feTurbulence type="turbulence" baseFrequency="0.06 0.16" numOctaves="3" seed="12"/><feColorMatrix type="matrix" values="-5 0 0 0 1.25  -5 0 0 0 1.25  -5 0 0 0 1.25  0 0 0 0 1"/><feComposite in2="SourceGraphic" operator="in"/></filter>
    </defs>
    <rect width="150" height="84" fill="url(#g5)"/>
    <g filter="url(#b3)"><path d="M0 0h70v24L44 30 0 28z" fill="#777" filter="url(#mrbL)"/>
    <path d="M60 0h90v46L98 39 60 20z" fill="#333" filter="url(#mrbR)"/></g>
    <g filter="url(#b1)">
      <path d="M32 84c0-26 6-60 20-72 8-7 22-8 30-2 16 10 22 46 24 74z" fill="#231b1c"/>
      <path d="M52 84c-5-14-5-28-1-36 4-10 14-26 21-28 4 2 14 14 17 24 3 12 2 26-2 40z" fill="#d8d1d4"/>
      <path d="M50 52c4-14 14-26 22-32-3 8-8 18-22 32zM72 20c6 6 14 16 19 30-1-14-8-26-19-30z" fill="#231b1c"/>
      <path d="M50 45c4-2.500 9-2.500 13-.5M75 45.500c4-2 8-1.500 11 1" stroke="#2a2021" stroke-width="1.500" fill="none"/>
      <ellipse cx="57" cy="49" rx="5" ry="3.200" fill="#1f1819"/><ellipse cx="80" cy="50.500" rx="5" ry="3.200" fill="#1f1819"/>
      <path d="M68 52c-1 4-2 7-1 9s5 2 6 0" stroke="#b9a9ab" stroke-width="1.200" fill="none"/>
      <path d="M40 22l6 9" stroke="#231b1c" stroke-width="1"/>
    </g>
  </svg>
  <div class="lbl m" style="width:118.500px"><svg viewBox="0 0 12 13"><rect x="4" y="1" width="4" height="7" rx="2" fill="#e0453e"/><path d="M2.500 6.500a3.500 3.500 0 0 0 7 0M6 10v2" stroke="#e0453e" stroke-width="1" fill="none"/><path d="M10.500 1L1.500 12" stroke="#e0453e" stroke-width="1.400"/></svg>Gabriela Magaña</div>
</div>
<!-- more button -->
<div class="abs" style="left:1065px;top:516px;width:69px;height:31px;border-radius:3px;background:#101010"></div>
<svg class="abs" style="left:1092px;top:526px" width="15" height="10" viewBox="0 0 15 10"><path d="M1.500 2l6 6 6-6" fill="none" stroke="#a8a8a8" stroke-width="1.500"/></svg>


</body>
</html>
